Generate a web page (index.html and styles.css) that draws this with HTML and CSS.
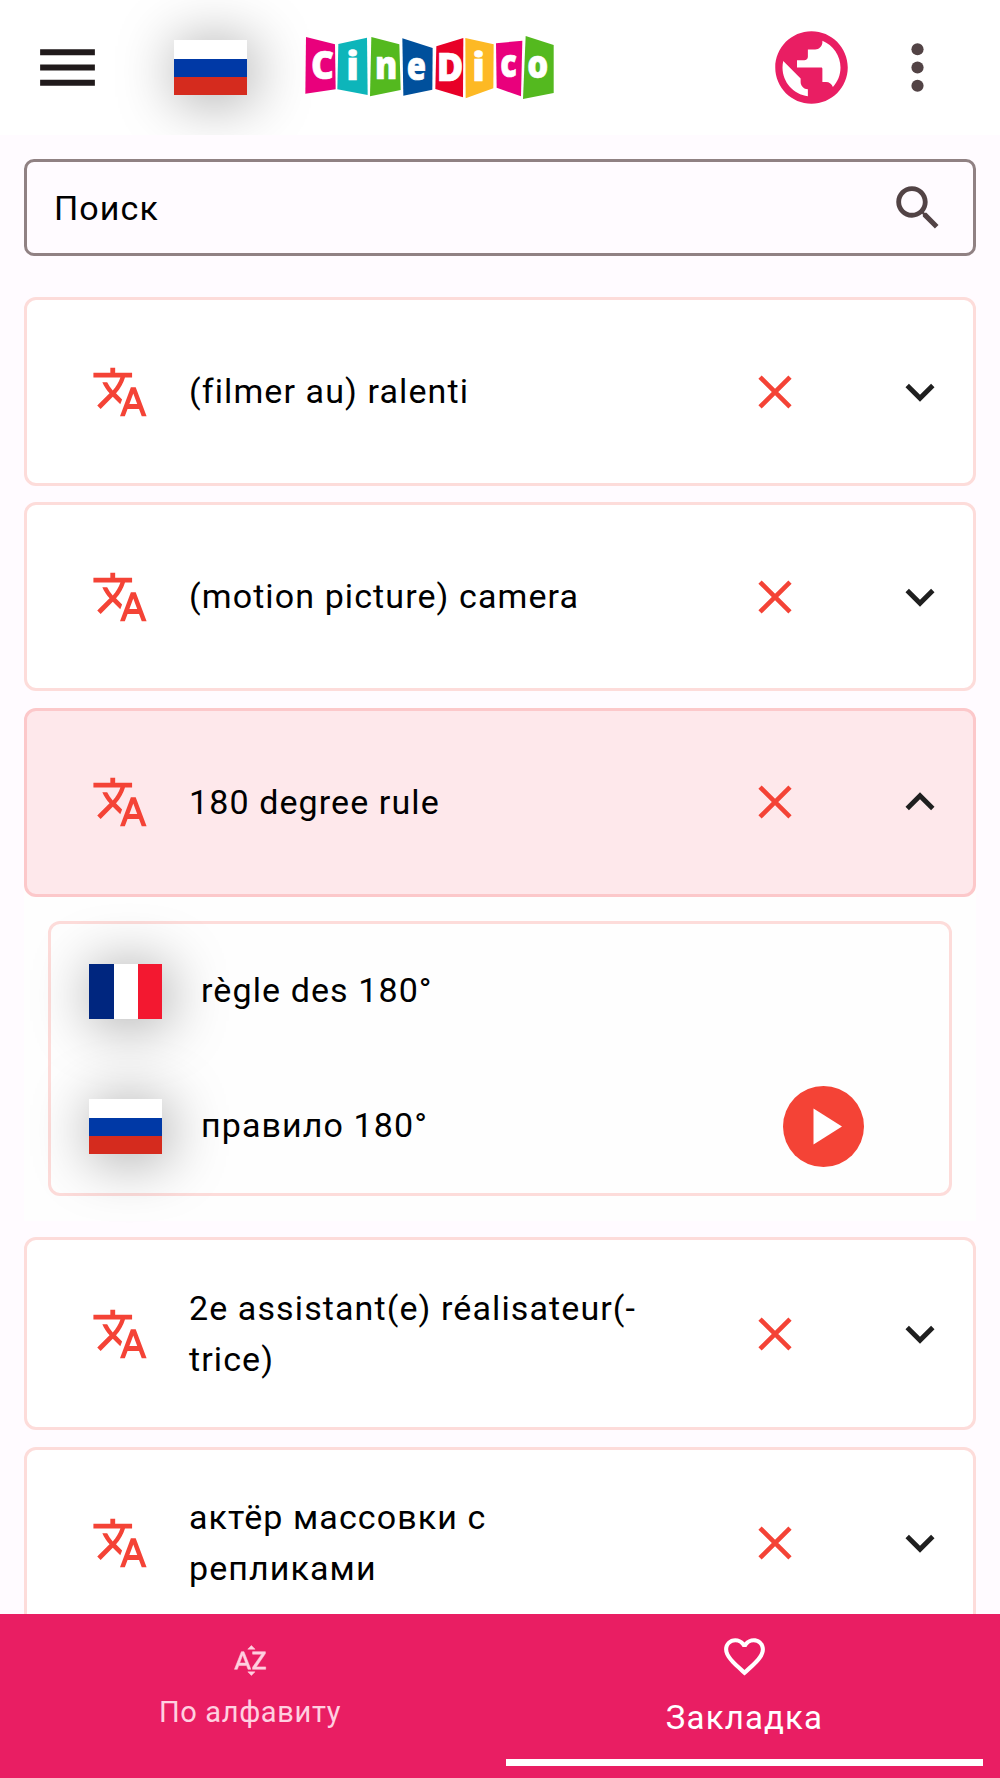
FILE: index.html
```html
<!DOCTYPE html>
<html lang="ru">
<head>
<meta charset="utf-8">
<title>CineDico</title>
<link rel="stylesheet" href="styles.css">
</head>
<body>
<svg class="defs" width="0" height="0" aria-hidden="true">
  <symbol id="translate" viewBox="0 0 24 24"><path d="M12.87 15.07l-2.54-2.51.03-.03c1.74-1.94 2.98-4.17 3.71-6.53H17V4h-7V2H8v2H1v1.99h11.17C11.5 7.92 10.44 9.75 9 11.35 8.07 10.32 7.3 9.19 6.69 8h-2c.73 1.63 1.73 3.17 2.98 4.56l-5.09 5.02L4 19l5-5 3.11 3.11.76-2.04zM18.500 10h-2L12 22h2l1.120-3h4.750L21 22h2l-4.500-12zm-2.620 7l1.620-4.330L19.120 17h-3.240z"/></symbol>
  <symbol id="close" viewBox="0 0 24 24"><path d="M5.800 5.800L18.200 18.200M18.200 5.800L5.800 18.200" fill="none" stroke="currentColor" stroke-width="1.900"/></symbol>
  <symbol id="down" viewBox="0 0 24 24"><path d="M7.410 8.590L12 13.170l4.590-4.580L18 10l-6 6-6-6 1.410-1.410z"/></symbol>
  <symbol id="up" viewBox="0 0 24 24"><path d="M7.410 15.410L12 10.830l4.590 4.580L18 14l-6-6-6 6 1.410 1.410z"/></symbol>
</svg>
<div class="app">
  <header class="topbar">
    <svg class="menu" viewBox="0 0 24 24"><path d="M3 18h18v-2H3v2zm0-5h18v-2H3v2zm0-7v2h18V6H3z"/></svg>
    <div class="flag flag-ru"></div>
    <svg class="logo" viewBox="0 0 840 270">
      <path fill="#e9007c" d="M48 51L135 73 137 208 46 221z"/>
      <path fill="#0db5ba" d="M145 72L231 53 233 225 142 208z"/>
      <path fill="#54b91f" d="M244 51L328 73 332 210 240 229z"/>
      <path fill="#00509c" d="M337 55L428 84 427 209 340 227z"/>
      <path fill="#e80027" d="M439 79L520 54 519 232 436 207z"/>
      <path fill="#fdb924" d="M526 54L611 73 610 205 527 235z"/>
      <path fill="#e9007c" d="M618 70L697 62 693 229 620 203z"/>
      <path fill="#54b91f" d="M707 48L791 75 791 219 699 237z"/>
      <g class="logo-text">
        <text x="63" y="178" textLength="69" lengthAdjust="spacingAndGlyphs">C</text>
        <text x="169" y="181" textLength="38" lengthAdjust="spacingAndGlyphs">i</text>
        <text x="255" y="178" textLength="67" lengthAdjust="spacingAndGlyphs">n</text>
        <text x="350" y="181" textLength="58" lengthAdjust="spacingAndGlyphs">e</text>
        <text x="440" y="183" textLength="80" lengthAdjust="spacingAndGlyphs">D</text>
        <text x="547" y="182" textLength="38" lengthAdjust="spacingAndGlyphs">i</text>
        <text x="631" y="171" textLength="50" lengthAdjust="spacingAndGlyphs">c</text>
        <text x="712" y="173" textLength="63" lengthAdjust="spacingAndGlyphs">o</text>
      </g>
    </svg>
    <svg class="globe" viewBox="0 0 24 24"><path d="M12 2C6.480 2 2 6.480 2 12s4.480 10 10 10 10-4.480 10-10S17.520 2 12 2zm-1 17.930c-3.950-.490-7-3.850-7-7.930 0-.620.080-1.210.210-1.790L9 15v1c0 1.100.900 2 2 2v1.930zm6.900-2.540c-.260-.810-1-1.390-1.900-1.390h-1v-3.600c0-.300-.100-.400-.400-.400H8v-2h2c.550 0 1-.450 1-1V7h2c1.100 0 2-.900 2-2v-.410c2.930 1.190 5 4.060 5 7.410 0 2.080-.800 3.970-2.100 5.390z"/></svg>
    <svg class="more" viewBox="0 0 24 24"><circle cx="12" cy="6" r="2"/><circle cx="12" cy="12" r="2"/><circle cx="12" cy="18" r="2"/></svg>
  </header>

  <main class="content">
    <div class="search">
      <span>Поиск</span>
      <svg class="icon" viewBox="0 0 24 24"><path d="M15.500 14h-.790l-.280-.270C15.410 12.590 16 11.110 16 9.500 16 5.910 13.090 3 9.500 3S3 5.910 3 9.500 5.910 16 9.500 16c1.610 0 3.090-.590 4.230-1.570l.270.280v.790l5 4.990L20.490 19l-4.990-5zm-6 0C7.010 14 5 11.990 5 9.500S7.010 5 9.500 5 14 7.010 14 9.500 11.990 14 9.500 14z"/></svg>
    </div>

    <div class="list">
      <div class="card"><svg class="icon red"><use href="#translate"/></svg><p>(filmer au) ralenti</p><svg class="icon red"><use href="#close"/></svg><svg class="icon chevron"><use href="#down"/></svg></div>
      <div class="card"><svg class="icon red"><use href="#translate"/></svg><p>(motion picture) camera</p><svg class="icon red"><use href="#close"/></svg><svg class="icon chevron"><use href="#down"/></svg></div>
      <section class="expanded">
        <div class="card open"><svg class="icon red"><use href="#translate"/></svg><p>180 degree rule</p><svg class="icon red"><use href="#close"/></svg><svg class="icon chevron"><use href="#up"/></svg></div>
        <div class="details">
          <div class="entry"><div class="flag flag-fr"></div><p>règle des 180°</p></div>
          <div class="entry"><div class="flag flag-ru"></div><p>правило 180°</p>
            <svg class="play" viewBox="0 0 81 81"><circle cx="40.500" cy="40.500" r="40.500"/><path fill="#fff" d="M30.500 22.500v36l28.500-18z"/></svg>
          </div>
        </div>
      </section>
      <div class="card"><svg class="icon red"><use href="#translate"/></svg><p>2e assistant(e) réalisateur(-<br>trice)</p><svg class="icon red"><use href="#close"/></svg><svg class="icon chevron"><use href="#down"/></svg></div>
      <div class="card"><svg class="icon red"><use href="#translate"/></svg><p>актёр массовки с<br>репликами</p><svg class="icon red"><use href="#close"/></svg><svg class="icon chevron"><use href="#down"/></svg></div>
    </div>
  </main>

  <nav class="tabs">
    <div class="tab">
      <svg class="sort" viewBox="0 0 24 24"><path d="M14.940 4.660h-4.720l2.360-2.360zm-4.690 14.710h4.660l-2.330 2.330zM6.100 6.270L1.600 17.730h1.840l.920-2.450h5.110l.920 2.450h1.840L7.740 6.270H6.100zm-1.130 7.370l1.940-5.180 1.940 5.180H4.970zm10.760 2.500h6.120v1.590h-8.530v-1.290l5.920-8.560h-5.880v-1.600h8.300v1.260l-5.930 8.600z"/></svg>
      <span>По алфавиту</span>
    </div>
    <div class="tab active">
      <svg class="heart" viewBox="0 0 24 24"><path d="M16.500 3c-1.740 0-3.410.810-4.500 2.090C10.910 3.810 9.240 3 7.500 3 4.420 3 2 5.420 2 8.500c0 3.780 3.400 6.860 8.550 11.540L12 21.350l1.450-1.320C18.600 15.360 22 12.280 22 8.500 22 5.420 19.580 3 16.500 3zm-4.400 15.550l-.100.100-.100-.100C7.140 14.240 4 11.390 4 8.500 4 6.500 5.500 5 7.500 5c1.540 0 3.040.990 3.570 2.360h1.870C13.460 5.990 14.960 5 16.500 5c2 0 3.500 1.500 3.500 3.500 0 2.890-3.140 5.740-7.900 10.050z"/></svg>
      <span>Закладка</span>
    </div>
  </nav>
</div>
</body>
</html>
```
FILE: styles.css
```css
* { box-sizing: border-box; }

body {
  margin: 0;
  background: #fffbff;
  color: #000;
  font-family: Roboto, "Liberation Sans", sans-serif;
  font-size: 34px;
  letter-spacing: 1.1px;
}

p { margin: 0; }

svg { display: block; flex: none; fill: currentColor; }

.defs { display: none; }

.app {
  width: 1000px;
  height: 1778px;
  display: flex;
  flex-direction: column;
  overflow: hidden;
}

.topbar {
  flex: none;
  height: 135px;
  display: flex;
  align-items: center;
  padding-left: 31px;
  background: #fff;
  overflow: hidden;
}

.menu { width: 73px; height: 73px; color: #201a1b; }
.topbar .flag { margin-left: 70px; }
.logo { width: 280px; height: 90px; margin: -5px 0 0 43px; }
.logo-text {
  font-family: "Open Sans", sans-serif;
  font-weight: 800;
  font-size: 118px;
  letter-spacing: 0;
  fill: #fff;
  stroke: #fff;
  stroke-width: 2;
}
.globe { width: 87px; height: 87px; margin-left: 198px; color: #e91e63; }
.more { width: 73px; height: 73px; margin-left: 26px; color: #524345; }

.flag {
  flex: none;
  width: 73px;
  height: 55px;
  box-shadow: 4px 4px 60px rgba(0, 0, 0, .4);
}
.flag-ru { background: linear-gradient(#fff 0 34%, #0039a6 34% 67%, #d52b1e 67%); }
.flag-fr { background: linear-gradient(90deg, #00267f 0 34%, #fff 34% 67%, #f31830 67%); }

.content {
  flex: 1;
  min-height: 0;
  padding: 24px 24px 0;
  overflow: hidden;
}

.search {
  height: 97px;
  display: flex;
  align-items: center;
  justify-content: space-between;
  padding: 0 26px 0 27px;
  border: 3px solid #908183;
  border-radius: 10px;
}

.icon { width: 58px; height: 58px; }
.search .icon { color: #524345; }
.red { color: #f44336; }

.list {
  display: flex;
  flex-direction: column;
  gap: 16.300px;
  margin-top: 41px;
}

.card {
  flex: none;
  min-height: 189px;
  display: grid;
  grid-template-columns: 58px 1fr 145px 58px;
  align-items: center;
  padding: 42.700px 24px 42.700px 64px;
  background: #fff;
  border: 3px solid #fddcda;
  border-radius: 12px;
  line-height: 51px;
}
.card p { padding-left: 40px; }
.card .chevron { color: #1f1f1f; }
.card.open { background: #fee8eb; border-color: #fcc8ca; }

.expanded {
  padding-bottom: 25px;
  background: linear-gradient(#fffbff 0 20px, #fefefe 20px);
}

.details {
  height: 275px;
  margin: 24px 24px 0;
  padding: 0 85px 0 38px;
  border: 3px solid #fddcda;
  border-radius: 12px;
}

.entry {
  height: 135px;
  display: flex;
  align-items: center;
}
.entry p { margin-left: 39px; padding-bottom: 2px; }
.play { width: 81px; height: 81px; margin-left: auto; color: #f44336; }

.tabs {
  flex: none;
  height: 164px;
  display: grid;
  grid-template-columns: 1fr 1fr;
  background: #e91e63;
  color: #ffd0e0;
}

.tab {
  display: flex;
  flex-direction: column;
  align-items: center;
  padding-top: 28px;
  font-size: 29px;
  letter-spacing: .650px;
}
.sort { width: 37px; height: 37px; stroke: currentColor; stroke-width: .350; }
.tab span { margin-top: 13px; line-height: 40px; }

.active {
  margin: 0 17px 12px 6px;
  padding-top: 18px;
  border-bottom: 7px solid #fff;
  color: #fff;
  font-size: 33px;
  letter-spacing: 1.150px;
}
.heart { width: 49px; height: 49px; }
.active span { margin-top: 17px; }
```
